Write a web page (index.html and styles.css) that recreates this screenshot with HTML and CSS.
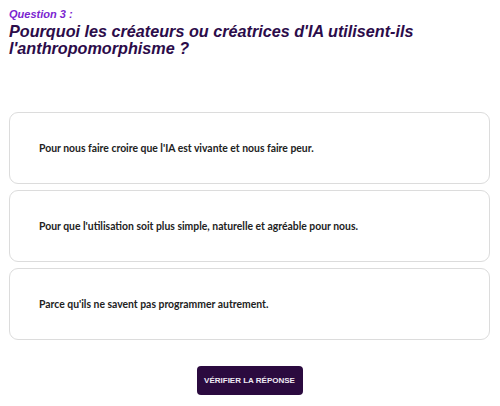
FILE: index.html
```html
<!DOCTYPE html>
<html lang="fr">
<head>
    <meta charset="UTF-8">
    <meta name="viewport" content="width=device-width, initial-scale=1.0">
    <title>Quiz IA</title>
    <link rel="stylesheet" href="styles.css">
</head>
<body>
    <div class="quiz">
        <div class="quiz-header">
            <p class="question-number">Question 3 :</p>
            <h2 class="question-text">Pourquoi les créateurs ou créatrices d'IA utilisent-ils l'anthropomorphisme ?</h2>
        </div>

        <!-- Answers -->
        <div class="answers">
            <div class="answer">Pour nous faire croire que l'IA est vivante et nous faire peur.</div>
            <div class="answer">Pour que l'utilisation soit plus simple, naturelle et agréable pour nous.</div>
            <div class="answer">Parce qu'ils ne savent pas programmer autrement.</div>
        </div>

        <div class="actions">
            <button type="button" class="check-btn">Vérifier la réponse</button>
        </div>
    </div>
</body>
</html>
```

FILE: styles.css
```css
body {
    margin: 0;
    background: #ffffff;
    font-family: 'Liberation Sans', Arial, sans-serif;
}
.quiz {
    padding: 7px 10px 0 9px;
}
.quiz-header {
    height: 105px;
}
.question-number {
    margin: 0;
    font-size: 11px;
    font-weight: bold;
    font-style: italic;
    color: #7a24d0;
    line-height: 15px;
}
.question-text {
    margin: 1px 0 0;
    font-size: 16.2px;
    font-weight: bold;
    font-style: italic;
    color: #2c0c4a;
    line-height: 17px;
}
.answers {
    display: flex;
    flex-direction: column;
    gap: 6px;
}
.answer {
    height: 72px;
    box-sizing: border-box;
    display: flex;
    align-items: center;
    padding-left: 29px;
    border: 1px solid #dcdcdc;
    border-radius: 9px;
    font-family: Lato, 'Noto Sans', sans-serif;
    font-weight: bold;
    font-size: 10.4px;
    color: #222222;
    cursor: pointer;
}
.actions {
    display: flex;
    justify-content: center;
    margin-top: 26px;
}
.check-btn {
    width: 106px;
    height: 29px;
    background: #2b0a3f;
    border: none;
    border-radius: 4px;
    color: #f0eaf5;
    font-family: 'Liberation Sans', Arial, sans-serif;
    font-weight: bold;
    font-size: 8px;
    text-transform: uppercase;
    cursor: pointer;
}
```
